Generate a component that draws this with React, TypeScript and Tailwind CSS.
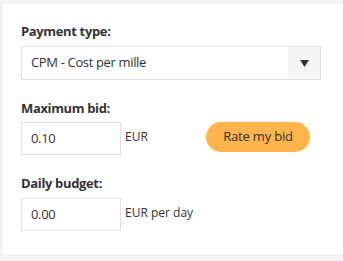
import React from "react";

export default function App() {
  return (
    <div className="w-[343px] h-[261px] bg-[#f4f4f4] pt-[4px] pl-[3px] overflow-hidden" style={{ fontFamily: '"Open Sans", "Noto Sans", sans-serif' }}>
      <div className="bg-white w-[340px] h-[250px] pl-[18px] pt-[18px] text-[#333] tracking-[-0.35px]">
        <div className="text-[13px] font-bold leading-[18px] text-[#333]">Payment type:</div>
        <div className="mt-[6px] w-[300px] h-[34px] border border-[#e2e2e2] flex items-stretch">
          <div className="flex-1 flex items-center pl-[9px] text-[13px] text-[#333]">CPM - Cost per mille</div>
          <div className="w-[32px] bg-[#f5f5f5] flex items-center justify-center">
            <svg width="9" height="7" viewBox="0 0 9 7"><path d="M0 0 H9 L4.5 7 Z" fill="#333" /></svg>
          </div>
        </div>
        <div className="mt-[19px] text-[13px] font-bold leading-[18px]">Maximum bid:</div>
        <div className="mt-[5px] flex items-start">
          <div className="w-[100px] h-[33px] border border-[#e2e2e2] flex items-center pl-[9px] text-[13px]">0.10</div>
          <div className="ml-[4px] w-[81px] text-[12px] leading-[18px] mt-[6px] tracking-normal">EUR</div>
          <button className="w-[104px] h-[30px] rounded-full bg-[#ffb54c] text-[13px] text-[#333] flex items-center justify-center tracking-[-0.2px]">Rate my bid</button>
        </div>
        <div className="mt-[19px] text-[13px] font-bold leading-[18px]">Daily budget:</div>
        <div className="mt-[6px] flex items-start">
          <div className="w-[100px] h-[33px] border border-[#e2e2e2] flex items-center pl-[9px] text-[13px]">0.00</div>
          <div className="ml-[4px] text-[12px] leading-[18px] mt-[6px] tracking-normal">EUR per day</div>
        </div>
      </div>
    </div>
  );
}
